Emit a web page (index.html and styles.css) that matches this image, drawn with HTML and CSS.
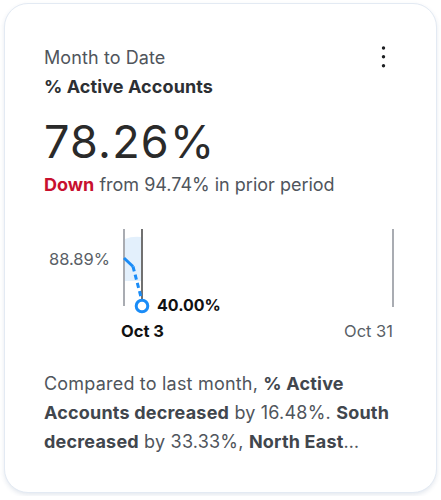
FILE: index.html
```html
<!DOCTYPE html>
<html lang="en">
<head>
    <meta charset="UTF-8">
    <meta name="viewport" content="width=device-width, initial-scale=1.0">
    <title>% Active Accounts</title>
    <link rel="stylesheet" href="styles.css">
</head>
<body>

    <div class="metric-card">
        <div class="card-header">
            <div>
                <div class="period">Month to Date</div>
                <div class="metric-name">% Active Accounts</div>
            </div>
            <svg class="menu-icon" width="26" height="26" viewBox="0 0 26 26">
                <circle cx="12.5" cy="5" r="1.7"/>
                <circle cx="12.5" cy="13.8" r="1.7"/>
                <circle cx="12.5" cy="22.7" r="1.7"/>
            </svg>
        </div>

        <div class="metric-value">78.26%</div>
        <div class="metric-change"><span class="down">Down</span> from 94.74% in prior period</div>

        <!-- sparkline: month so far vs. full month -->
        <svg class="trend-chart" width="353" height="125" viewBox="0 0 353 125">
            <text class="axis-label" x="66" y="45" text-anchor="end">88.89%</text>
            <line class="bound" x1="80" y1="9" x2="80" y2="86"/>
            <path class="band" d="M81,19 Q88,16 97,17 L97,61 L81,61 Z"/>
            <line class="today" x1="98" y1="9" x2="98" y2="80"/>
            <polyline class="trend" points="80,38 89,46.5"/>
            <line class="trend dashed" x1="89" y1="46.5" x2="97.5" y2="79"/>
            <circle class="point" cx="98" cy="86" r="5.8"/>
            <text class="point-label" x="113" y="91">40.00%</text>
            <line class="bound" x1="349" y1="9" x2="349" y2="87"/>
            <text class="date-label current" x="77" y="117">Oct 3</text>
            <text class="date-label" x="349" y="117" text-anchor="end">Oct 31</text>
        </svg>

        <p class="summary">Compared to last month, <b>% Active</b> <b>Accounts decreased</b> by 16.48%. <b>South</b> <b>decreased</b> by 33.33%, <b>North East</b>…</p>
    </div>

</body>
</html>
```

FILE: styles.css
```css
body {
    font-family: Inter, "Noto Sans", sans-serif;
    margin: 0;
    background-color: #ffffff;
}
.metric-card {
    box-sizing: border-box;
    width: 433px;
    height: 490px;
    margin: 3px 4px;
    padding: 39px 39px 0;
    background-color: white;
    border: 1px solid #e3eaf3;
    border-radius: 24px;
    box-shadow: 0 2px 4px rgba(40, 70, 120, 0.12);
}
.card-header {
    display: flex;
    justify-content: space-between;
    align-items: flex-start;
}
.period {
    font-size: 18px;
    line-height: 29px;
    letter-spacing: 0.1px;
    color: #50555c;
}
.metric-name {
    font-size: 18px;
    line-height: 29px;
    letter-spacing: 0.1px;
    font-weight: 700;
    color: #2c2f33;
}
.menu-icon {
    fill: #1d1f22;
}
.metric-value {
    margin-top: 19px;
    font-size: 45px;
    line-height: 44px;
    letter-spacing: 1.2px;
    color: #2a2a2a;
}
.metric-change {
    margin-top: 6px;
    font-size: 18px;
    line-height: 29px;
    color: #50555c;
}
.down {
    color: #c8102e;
    font-weight: 700;
}
.trend-chart {
    display: block;
    margin-top: 21px;
    overflow: visible;
}
.axis-label {
    font-size: 16.5px;
    fill: #5a5f66;
}
.bound {
    stroke: #8c9199;
    stroke-width: 1.5;
}
.band {
    fill: #e3f0fc;
}
.today {
    stroke: #111;
    stroke-width: 1.2;
}
.trend {
    fill: none;
    stroke: #1a8cf7;
    stroke-width: 3;
}
.dashed {
    stroke-dasharray: 5 3.5;
}
.point {
    fill: white;
    stroke: #1a8cf7;
    stroke-width: 3;
}
.point-label {
    font-size: 16px;
    font-weight: 700;
    fill: #111;
}
.date-label {
    font-size: 16.5px;
    fill: #5a5f66;
}
.date-label.current {
    font-weight: 700;
    fill: #111;
}
.summary {
    margin: 25px 0 0;
    font-size: 18px;
    line-height: 28.8px;
    letter-spacing: 0.2px;
    color: #50555c;
}
.summary b {
    color: #41464d;
}
```
